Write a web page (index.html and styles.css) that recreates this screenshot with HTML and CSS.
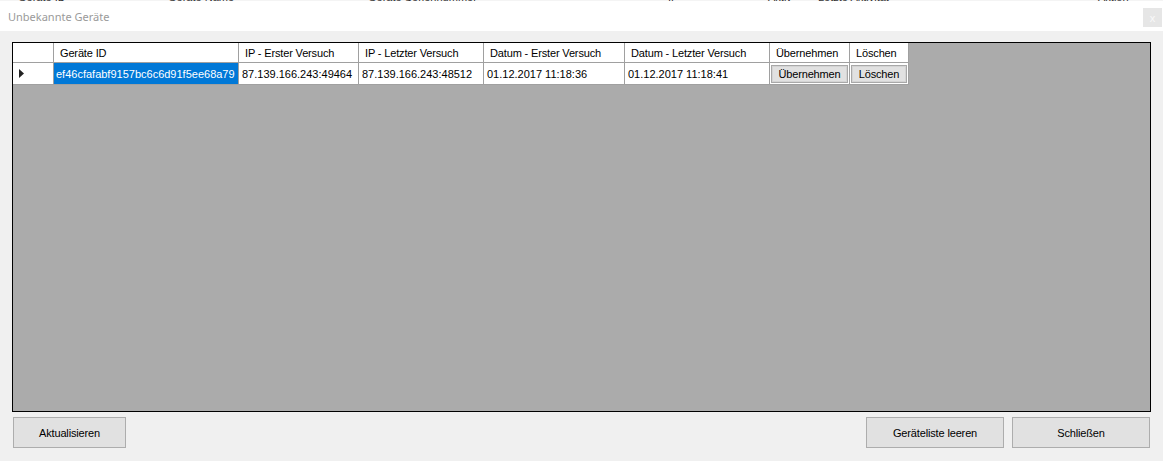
FILE: index.html
```html
<!DOCTYPE html>
<html lang="de">
<head>
<meta charset="utf-8">
<title>Unbekannte Geräte</title>
<link rel="stylesheet" href="styles.css">
</head>
<body>
<div class="bgstrip">
  <span class="bg1">Geräte ID</span>
  <span class="bg2">Geräte Name</span>
  <span class="bg3">Geräte Seriennummer</span>
  <span class="bg4">IP</span>
  <span class="bg5">Aktiv</span>
  <span class="bg6">Letzte Aktivität</span>
  <span class="bg7">Aktion</span>
</div>
<div class="titlebar">
  <span class="title">Unbekannte Geräte</span>
  <span class="close">x</span>
</div>
<div class="main">
  <div class="grid">
    <div class="row head">
      <div class="cell"></div>
      <div class="cell">Geräte ID</div>
      <div class="cell">IP - Erster Versuch</div>
      <div class="cell">IP - Letzter Versuch</div>
      <div class="cell">Datum - Erster Versuch</div>
      <div class="cell">Datum - Letzter Versuch</div>
      <div class="cell">Übernehmen</div>
      <div class="cell">Löschen</div>
    </div>
    <div class="row data">
      <div class="cell rowhead"><svg width="5" height="9" viewBox="0 0 5 9"><path d="M0 0 L5 4.5 L0 9 Z" fill="#222"/></svg></div>
      <div class="cell selected">ef46cfafabf9157bc6c6d91f5ee68a79</div>
      <div class="cell">87.139.166.243:49464</div>
      <div class="cell">87.139.166.243:48512</div>
      <div class="cell">01.12.2017 11:18:36</div>
      <div class="cell">01.12.2017 11:18:41</div>
      <div class="cell btncell"><span class="gbtn">Übernehmen</span></div>
      <div class="cell btncell"><span class="gbtn">Löschen</span></div>
    </div>
  </div>
</div>
<div class="footer">
  <button class="btn btn-left">Aktualisieren</button>
  <div class="right">
    <button class="btn btn-right">Geräteliste leeren</button>
    <button class="btn btn-right">Schließen</button>
  </div>
</div>
</body>
</html>
```
FILE: styles.css
```css
html, body {
  margin: 0;
  padding: 0;
}
body {
  width: 1163px;
  height: 461px;
  overflow: hidden;
  background: #f0f0f0;
  font-family: "Liberation Sans", Arial, sans-serif;
  font-size: 11px;
  color: #000;
}
.bgstrip {
  height: 1px;
  overflow: hidden;
  display: flex;
  align-items: flex-end;
  background: #f4f4f4;
  font-size: 11px;
  line-height: 8px;
  color: #333;
  white-space: nowrap;
}
.bgstrip span { display: block; }
.bg1 { margin-left: 18px; width: 150px; }
.bg2 { width: 200px; }
.bg3 { width: 300px; }
.bg4 { width: 100px; }
.bg5 { width: 50px; }
.bg6 { width: 280px; }

.titlebar {
  height: 30px;
  background: #fff;
  display: flex;
  align-items: center;
  justify-content: space-between;
  padding-left: 8px;
}
.title {
  font-family: "Noto Sans", "Open Sans", sans-serif;
  font-size: 11px;
  color: #9a9a9a;
}
.close {
  align-self: flex-start;
  margin-top: 7px;
  margin-right: 1px;
  width: 19px;
  height: 19px;
  background: #e6e6e6;
  color: #f9f9f9;
  font-size: 11px;
  display: flex;
  align-items: center;
  justify-content: center;
}

.main {
  padding: 11px 12px 0 12px;
}
.grid {
  height: 370px;
  box-sizing: border-box;
  border: 1px solid #000;
  background: #ababab;
}
.row {
  display: grid;
  grid-template-columns: 41px 185px 120px 125px 141px 145px 80px 59px;
  width: 896px;
}
.head { height: 20px; }
.data { height: 22px; }
.cell {
  box-sizing: border-box;
  background: #fff;
  border-right: 1px solid #a0a0a0;
  border-bottom: 1px solid #a0a0a0;
  display: flex;
  align-items: center;
  white-space: nowrap;
  overflow: hidden;
}
.head .cell { padding-left: 6px; letter-spacing: -0.15px; }
.data .cell { padding-left: 3px; }
.data .rowhead { padding-left: 6px; }
.data .selected {
  background: #0078d7;
  color: #fff;
  padding-left: 2px;
}
.data .btncell {
  padding: 2px 1px 1px 1px;
  align-items: stretch;
}
.gbtn {
  flex: 1;
  background: #e1e1e1;
  border: 1px solid #a8a8a8;
  box-shadow: inset 0 0 0 1px #d4d4d4;
  display: flex;
  align-items: center;
  justify-content: center;
  letter-spacing: -0.15px;
}

.footer {
  display: flex;
  justify-content: space-between;
  padding: 5px 13px 0 13px;
}
.right {
  display: flex;
  gap: 8px;
}
.btn {
  height: 31px;
  box-sizing: border-box;
  margin: 0;
  padding: 0;
  background: #e1e1e1;
  border: 1px solid #adadad;
  font-family: "Liberation Sans", Arial, sans-serif;
  font-size: 11px;
  letter-spacing: -0.15px;
  color: #000;
}
.btn-left { width: 113px; }
.btn-right { width: 138px; }
```
